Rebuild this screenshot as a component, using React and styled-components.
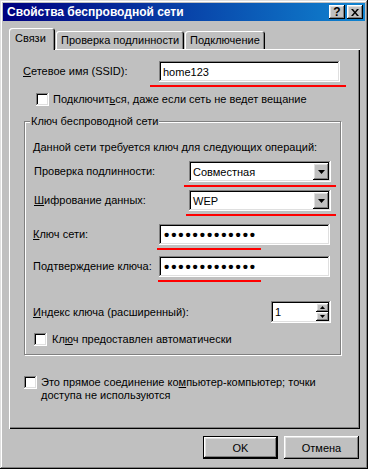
import React from "react";
import styled, { createGlobalStyle } from "styled-components";

const GlobalStyle = createGlobalStyle`
  html, body {
    margin: 0;
    padding: 0;
    background: #c0c0c0;
  }
  body {
    font-family: "Liberation Sans", Arial, sans-serif;
    font-size: 11px;
    color: #000;
  }
`;

const raised = `
  box-shadow: inset -1px -1px #000, inset 1px 1px #fff, inset -2px -2px #808080, inset 2px 2px #dfdfdf;
`;

const sunken = `
  box-shadow: inset -1px -1px #fff, inset 1px 1px #808080, inset -2px -2px #dfdfdf, inset 2px 2px #000;
`;

const Window = styled.div`
  width: 368px;
  height: 469px;
  box-sizing: border-box;
  padding: 3px;
  background: #c0c0c0;
  box-shadow: inset -1px -1px #000, inset 1px 1px #dfdfdf, inset -2px -2px #808080, inset 2px 2px #fff;
  display: flex;
  flex-direction: column;
`;

const TitleBar = styled.div`
  height: 18px;
  flex: none;
  display: flex;
  align-items: center;
  justify-content: space-between;
  padding: 0 2px 0 3px;
  background: linear-gradient(90deg, #000080, #1084d0);
`;

const Title = styled.span`
  color: #fff;
  font-weight: bold;
  font-size: 12px;
  white-space: nowrap;
  padding-left: 1px;
`;

const TitleButtons = styled.div`
  display: flex;
  gap: 2px;
`;

const TitleButton = styled.div`
  width: 16px;
  height: 14px;
  background: #c0c0c0;
  ${raised}
  display: flex;
  align-items: center;
  justify-content: center;
  font-weight: bold;
  font-size: 12px;
  line-height: 14px;
`;

const Body = styled.div`
  flex: 1;
  display: flex;
  flex-direction: column;
  padding: 7px 5px 0 6px;
`;

const TabStrip = styled.div`
  height: 21px;
  display: flex;
  align-items: flex-end;
  position: relative;
  z-index: 1;
`;

const Tab = styled.div`
  width: ${(p) => p.$w}px;
  height: ${(p) => (p.$active ? 22 : 18)}px;
  margin-bottom: ${(p) => (p.$active ? -1 : 0)}px;
  margin-right: 1px;
  box-sizing: border-box;
  background: #c0c0c0;
  border-radius: 3px 3px 0 0;
  box-shadow: inset 1px 1px #fff, inset -1px 0 #000, inset -2px 0 #808080;
  display: flex;
  align-items: ${(p) => (p.$active ? "flex-start" : "center")};
  padding: ${(p) => (p.$active ? "4px 0 0 6px" : "0 0 0 5px")};
  white-space: nowrap;
`;

const Panel = styled.div`
  height: 380px;
  box-sizing: border-box;
  padding: 12px 16px 0 14px;
  box-shadow: inset 1px 1px #fff, inset -1px -1px #000, inset -2px -2px #808080;
  display: flex;
  flex-direction: column;
`;

const Row = styled.div`
  display: flex;
  align-items: ${(p) => p.$align || "center"};
  margin-top: ${(p) => p.$mt || 0}px;
  margin-left: ${(p) => p.$ml || 0}px;
  gap: ${(p) => p.$gap || 0}px;
`;

const Label = styled.span`
  width: ${(p) => (p.$w ? `${p.$w}px` : "auto")};
  flex: none;
  white-space: nowrap;
  padding-left: ${(p) => p.$pl || 0}px;
  box-sizing: border-box;
  line-height: 13px;
`;

const Field = styled.div`
  position: relative;
  width: ${(p) => p.$w}px;
  height: ${(p) => p.$h || 21}px;
  flex: none;
  box-sizing: border-box;
  background: #fff;
  ${sunken}
  display: flex;
  align-items: center;
  padding: 2px 2px 2px 3px;

  &::after {
    content: "";
    display: ${(p) => (p.$mark ? "block" : "none")};
    position: absolute;
    left: ${(p) => (p.$mark ? p.$mark[0] : 0)}px;
    right: ${(p) => (p.$mark ? p.$mark[1] : 0)}px;
    top: calc(100% + 3px);
    height: 2px;
    background: #f00;
  }
`;

const FieldText = styled.span`
  flex: 1;
  white-space: nowrap;
  padding-left: 1px;
`;

const Dots = styled.span`
  font-size: 15px;
  font-weight: bold;
  letter-spacing: 1.9px;
  line-height: 14px;
  padding-left: 2px;
`;

const DropButton = styled.div`
  width: 16px;
  height: 17px;
  flex: none;
  background: #c0c0c0;
  ${raised}
  display: flex;
  align-items: center;
  justify-content: center;
`;

const SpinButtons = styled.div`
  display: flex;
  flex-direction: column;
  align-self: stretch;
`;

const SpinButton = styled.div`
  width: 13px;
  flex: 1;
  background: #c0c0c0;
  ${raised}
  display: flex;
  align-items: center;
  justify-content: center;
`;

const Check = styled.div`
  width: 13px;
  height: 13px;
  flex: none;
  box-sizing: border-box;
  background: #fff;
  ${sunken}
`;

const Group = styled.div`
  position: relative;
  width: 317px;
  height: 234px;
  box-sizing: border-box;
  margin-top: 15px;
  margin-left: 1px;
  border: 1px solid #808080;
  box-shadow: inset 1px 1px #fff, 1px 1px #fff;
  padding: 19px 8px 0 8px;
  display: flex;
  flex-direction: column;
`;

const Legend = styled.span`
  position: absolute;
  top: -7px;
  left: 5px;
  padding: 0 1px;
  background: #c0c0c0;
  line-height: 13px;
  white-space: nowrap;
`;

const Note = styled.div`
  line-height: 13px;
  white-space: nowrap;
`;

const ButtonRow = styled.div`
  display: flex;
  justify-content: flex-end;
  gap: 6px;
  margin-top: 7px;
  padding-right: 1px;
`;

const Button = styled.div`
  width: 75px;
  height: 23px;
  box-sizing: border-box;
  background: #c0c0c0;
  display: flex;
  align-items: center;
  justify-content: center;
  ${(p) =>
    p.$default
      ? `border: 1px solid #000; box-shadow: inset -1px -1px #000, inset 1px 1px #fff, inset -2px -2px #808080, inset 2px 2px #dfdfdf;`
      : raised}
`;

const Arrow = ({ up, w = 7, h = 4 }) => (
  <svg width={w} height={h} viewBox={`0 0 ${w} ${h}`}>
    <polygon
      points={up ? `0,${h} ${w},${h} ${w / 2},0` : `0,0 ${w},0 ${w / 2},${h}`}
      fill="#000"
    />
  </svg>
);

const CloseGlyph = () => (
  <svg width="8" height="7" viewBox="0 0 8 7">
    <path d="M0 0h2l2 2.5L6 0h2L5 3.5 8 7H6L4 4.5 2 7H0l3-3.5z" fill="#000" />
  </svg>
);

const Select = ({ value, mark }) => (
  <Field $w={142} $mark={mark}>
    <FieldText>{value}</FieldText>
    <DropButton>
      <Arrow />
    </DropButton>
  </Field>
);

const App = () => {
  return (
    <Window>
      <GlobalStyle />
      <TitleBar>
        <Title>Свойства беспроводной сети</Title>
        <TitleButtons>
          <TitleButton>?</TitleButton>
          <TitleButton>
            <CloseGlyph />
          </TitleButton>
        </TitleButtons>
      </TitleBar>

      <Body>
        <TabStrip>
          <Tab $w={46} $active>Связи</Tab>
          <Tab $w={128}>Проверка подлинности</Tab>
          <Tab $w={80}>Подключение</Tab>
        </TabStrip>

        <Panel>
          <Row>
            <Label $w={136}>
              <u>С</u>етевое имя (SSID):
            </Label>
            <Field $w={181} $mark={[-9, -6]}>
              <FieldText>home123</FieldText>
            </Field>
          </Row>

          <Row $mt={11} $ml={13} $gap={4}>
            <Check />
            <Label>
              Подключит<u>ь</u>ся, даже если сеть не ведет вещание
            </Label>
          </Row>

          <Group>
            <Legend>Ключ беспроводной сети</Legend>
            <Note>Данной сети требуется ключ для следующих операций:</Note>

            <Row $mt={7}>
              <Label $w={156} $pl={1}>
                Проверка по<u>д</u>линности:
              </Label>
              <Select value="Совместная" mark={[-5, -5]} />
            </Row>

            <Row $mt={8}>
              <Label $w={156} $pl={1}>
                <u>Ш</u>ифрование данных:
              </Label>
              <Select value="WEP" mark={[-3, -5]} />
            </Row>

            <Row $mt={13}>
              <Label $w={126}>
                <u>К</u>люч сети:
              </Label>
              <Field $w={171} $mark={[-2, 69]}>
                <Dots>{"•".repeat(13)}</Dots>
              </Field>
            </Row>

            <Row $mt={11}>
              <Label $w={126}>
                По<u>д</u>тверждение ключа:
              </Label>
              <Field $w={171} $mark={[-1, 69]}>
                <Dots>{"•".repeat(13)}</Dots>
              </Field>
            </Row>

            <Row $mt={24}>
              <Label $w={238}>
                <u>И</u>ндекс ключа (расширенный):
              </Label>
              <Field $w={60} $h={22}>
                <FieldText>1</FieldText>
                <SpinButtons>
                  <SpinButton>
                    <Arrow up w={5} h={3} />
                  </SpinButton>
                  <SpinButton>
                    <Arrow w={5} h={3} />
                  </SpinButton>
                </SpinButtons>
              </Field>
            </Row>

            <Row $mt={10} $ml={1} $gap={5}>
              <Check />
              <Label>
                Кл<u>ю</u>ч предоставлен автоматически
              </Label>
            </Row>
          </Group>

          <Row $mt={21} $ml={1} $gap={4} $align="flex-start">
            <Check />
            <Label>
              Это прямое соединение ко<u>м</u>пьютер-компьютер; точки
              <br />
              доступа не используются
            </Label>
          </Row>
        </Panel>

        <ButtonRow>
          <Button $default>OK</Button>
          <Button>Отмена</Button>
        </ButtonRow>
      </Body>
    </Window>
  );
};

export default App;
